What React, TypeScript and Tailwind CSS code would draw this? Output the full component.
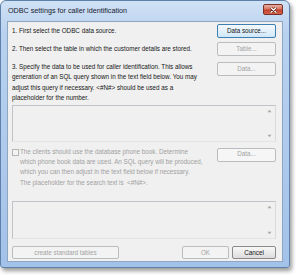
import React from "react";

type BtnProps = {
  children: React.ReactNode;
  kind?: "normal" | "focus" | "disabled";
  className?: string;
};

function Btn({ children, kind = "normal", className = "" }: BtnProps) {
  const look =
    kind === "focus"
      ? "border-[#3c7fb1] bg-[linear-gradient(#f4fafe,#e3f1fb_50%,#cfe7f8)] text-[#141414]"
      : kind === "disabled"
        ? "border-[#b9bdc0] bg-[#f3f3f3] text-[#a3a3a3]"
        : "border-[#8a8a8a] bg-[linear-gradient(#f7f7f7,#ebebeb_50%,#dcdcdc)] text-[#141414]";
  return (
    <div
      className={`flex items-center justify-center rounded-[2px] border text-[6.3px] leading-none ${look} ${className}`}
    >
      {children}
    </div>
  );
}

function TextBox({ className = "" }: { className?: string }) {
  return (
    <div
      className={`relative ml-[4px] mr-[6px] border border-[#bfc2c6] border-b-[#e4e4e4] border-r-[#dadada] bg-[#f0f0f0] ${className}`}
    >
      <div className="absolute right-[3px] top-[3px] flex h-[calc(100%-6px)] flex-col justify-between">
        <svg width="5" height="4" viewBox="0 0 5 4">
          <path d="M0.5 3.2 L2.5 0.8 L4.5 3.2 Z" fill="#a9a9a9" />
        </svg>
        <svg width="5" height="4" viewBox="0 0 5 4">
          <path d="M0.5 0.8 L2.5 3.2 L4.5 0.8 Z" fill="#a9a9a9" />
        </svg>
      </div>
    </div>
  );
}

export default function App() {
  return (
    <div className="h-[275px] w-[296px] bg-white font-['Liberation_Sans',Arial,sans-serif]">
      <div className="flex h-[268px] w-[290px] flex-col rounded-t-[6px] rounded-b-[3px] border border-[#5f80a8] bg-[linear-gradient(#d0e1f5,#b8d1ef_12%,#adc9ec_60%,#a3c2e9)] shadow-[2px_3px_4px_rgba(0,0,0,0.4)]">
        {/* title bar */}
        <div className="flex h-[20px] items-start justify-between pl-[7px] pr-[6px]">
          <span className="mt-[6px] text-[7.2px] leading-none text-[#16202e]">
            ODBC settings for caller identification
          </span>
          <div className="mt-[3px] flex h-[11px] w-[20px] items-center justify-center rounded-[2px] border border-[#7a3026] bg-[linear-gradient(#eab1a3,#d9735f_45%,#c2412b_55%,#d4624a)]">
            <svg width="7" height="6" viewBox="0 0 7 6">
              <path
                d="M1 0.8 L6 5.2 M6 0.8 L1 5.2"
                stroke="#5a1a12"
                strokeWidth="2.4"
                strokeLinecap="round"
              />
              <path
                d="M1 0.8 L6 5.2 M6 0.8 L1 5.2"
                stroke="#ffffff"
                strokeWidth="1.3"
                strokeLinecap="round"
              />
            </svg>
          </div>
        </div>

        {/* client area */}
        <div className="mx-[6px] flex h-[241px] flex-col border border-[#8ea6c2] bg-[#f0f0f0] text-[6.3px] text-[#161616]">
          <div className="mt-[2px] flex items-start justify-between pl-[4px] pr-[6px]">
            <p className="mt-[2px] leading-[10px]">1. First select the ODBC data source.</p>
            <Btn kind="focus" className="h-[14px] w-[59px]">
              Data source...
            </Btn>
          </div>

          <div className="mt-[4px] flex items-start justify-between pl-[4px] pr-[6px]">
            <p className="mt-[2px] leading-[10px]">
              2. Then select the table in which the customer details are stored.
            </p>
            <Btn kind="disabled" className="h-[14px] w-[59px]">
              Table...
            </Btn>
          </div>

          <div className="mt-[6px] flex items-start justify-between pl-[4px] pr-[6px]">
            <p className="leading-[10.4px]">
              3. Specify the data to be used for caller identification. This allows
              <br />
              generation of an SQL query shown in the text field below. You may
              <br />
              adjust this query if necessary. &lt;#N#&gt; should be used as a
              <br />
              placeholder for the number.
            </p>
            <Btn kind="disabled" className="h-[14px] w-[59px]">
              Data...
            </Btn>
          </div>

          <TextBox className="mt-[1px] h-[37px]" />

          <div className="mt-[5px] flex items-start justify-between pl-[4px] pr-[6px]">
            <div className="flex items-start gap-[1px]">
              <div className="mt-[2px] h-[7px] w-[7px] border border-[#b4b4b4] bg-[#f4f4f4]" />
              <p className="leading-[10.4px] text-[#a0a0a0]">
                The clients should use the database phone book. Determine
                <br />
                which phone book data are used. An SQL query will be produced,
                <br />
                which you can then adjust in the text field below if necessary.
                <br />
                The placeholder for the search text is &nbsp;&lt;#N#&gt;.
              </p>
            </div>
            <Btn kind="disabled" className="mt-[1px] h-[14px] w-[59px] border-[#a8acaf] bg-[#f6f6f6]">
              Data...
            </Btn>
          </div>

          <TextBox className="mt-[13px] h-[38px]" />

          <div className="mt-[7px] flex items-center pl-[4px] pr-[6px]">
            <Btn kind="disabled" className="h-[13px] w-[107px]">
              create standard tables
            </Btn>
            <div className="ml-auto flex gap-[3px]">
              <Btn kind="disabled" className="h-[13px] w-[47px]">
                OK
              </Btn>
              <Btn className="h-[13px] w-[44px]">Cancel</Btn>
            </div>
          </div>
        </div>
      </div>
    </div>
  );
}
